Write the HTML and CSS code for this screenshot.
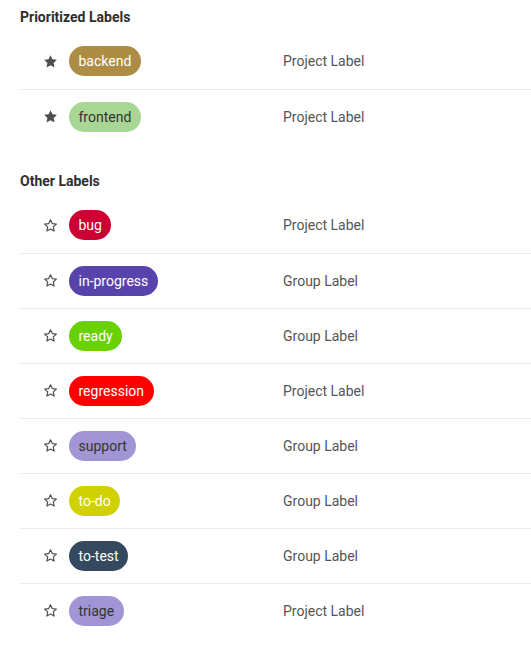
FILE: index.html
```html
<!DOCTYPE html>
<html>
<head>
<meta charset="utf-8">
<link rel="stylesheet" href="styles.css">
</head>
<body>
<div class="page">
  <section class="section">
    <h3 class="heading">Prioritized Labels</h3>
    <ul class="list">
      <li class="row"><span class="star"><svg viewBox="0 0 24 24" width="15" height="15"><path class="filled" d="M12 1.8l3.1 6.6 7.2.9-5.3 5 1.4 7.1L12 17.9l-6.4 3.5L7 14.3l-5.3-5 7.2-.9z"/></svg></span><span class="name"><span class="pill light" style="background:#ad8d43;color:#fff">backend</span></span><span class="type">Project Label</span></li>
      <li class="row"><span class="star"><svg viewBox="0 0 24 24" width="15" height="15"><path class="filled" d="M12 1.8l3.1 6.6 7.2.9-5.3 5 1.4 7.1L12 17.9l-6.4 3.5L7 14.3l-5.3-5 7.2-.9z"/></svg></span><span class="name"><span class="pill dark" style="background:#a8d695">frontend</span></span><span class="type">Project Label</span></li>
    </ul>
  </section>
  <section class="section other">
    <h3 class="heading">Other Labels</h3>
    <ul class="list">
      <li class="row"><span class="star"><svg viewBox="0 0 24 24" width="15" height="15"><path class="outline" d="M12 2.8l2.8 6.1 6.6.8-4.9 4.6 1.3 6.6L12 17.6l-5.8 3.3 1.3-6.6-4.9-4.6 6.6-.8z"/></svg></span><span class="name"><span class="pill light" style="background:#cc0033">bug</span></span><span class="type">Project Label</span></li>
      <li class="row"><span class="star"><svg viewBox="0 0 24 24" width="15" height="15"><path class="outline" d="M12 2.8l2.8 6.1 6.6.8-4.9 4.6 1.3 6.6L12 17.6l-5.8 3.3 1.3-6.6-4.9-4.6 6.6-.8z"/></svg></span><span class="name"><span class="pill light" style="background:#5843ad">in-progress</span></span><span class="type">Group Label</span></li>
      <li class="row"><span class="star"><svg viewBox="0 0 24 24" width="15" height="15"><path class="outline" d="M12 2.8l2.8 6.1 6.6.8-4.9 4.6 1.3 6.6L12 17.6l-5.8 3.3 1.3-6.6-4.9-4.6 6.6-.8z"/></svg></span><span class="name"><span class="pill light" style="background:#69d100">ready</span></span><span class="type">Group Label</span></li>
      <li class="row"><span class="star"><svg viewBox="0 0 24 24" width="15" height="15"><path class="outline" d="M12 2.8l2.8 6.1 6.6.8-4.9 4.6 1.3 6.6L12 17.6l-5.8 3.3 1.3-6.6-4.9-4.6 6.6-.8z"/></svg></span><span class="name"><span class="pill light" style="background:#ff0000">regression</span></span><span class="type">Project Label</span></li>
      <li class="row"><span class="star"><svg viewBox="0 0 24 24" width="15" height="15"><path class="outline" d="M12 2.8l2.8 6.1 6.6.8-4.9 4.6 1.3 6.6L12 17.6l-5.8 3.3 1.3-6.6-4.9-4.6 6.6-.8z"/></svg></span><span class="name"><span class="pill dark" style="background:#a295d6">support</span></span><span class="type">Group Label</span></li>
      <li class="row"><span class="star"><svg viewBox="0 0 24 24" width="15" height="15"><path class="outline" d="M12 2.8l2.8 6.1 6.6.8-4.9 4.6 1.3 6.6L12 17.6l-5.8 3.3 1.3-6.6-4.9-4.6 6.6-.8z"/></svg></span><span class="name"><span class="pill light" style="background:#d1d100">to-do</span></span><span class="type">Group Label</span></li>
      <li class="row"><span class="star"><svg viewBox="0 0 24 24" width="15" height="15"><path class="outline" d="M12 2.8l2.8 6.1 6.6.8-4.9 4.6 1.3 6.6L12 17.6l-5.8 3.3 1.3-6.6-4.9-4.6 6.6-.8z"/></svg></span><span class="name"><span class="pill light" style="background:#34495e">to-test</span></span><span class="type">Group Label</span></li>
      <li class="row"><span class="star"><svg viewBox="0 0 24 24" width="15" height="15"><path class="outline" d="M12 2.8l2.8 6.1 6.6.8-4.9 4.6 1.3 6.6L12 17.6l-5.8 3.3 1.3-6.6-4.9-4.6 6.6-.8z"/></svg></span><span class="name"><span class="pill dark" style="background:#a295d6">triage</span></span><span class="type">Project Label</span></li>
    </ul>
  </section>
</div>
</body>
</html>
```
FILE: styles.css
```css
html, body {
  margin: 0;
  padding: 0;
  background: #fff;
}
body {
  font-family: Roboto, "Liberation Sans", sans-serif;
  font-size: 14px;
  color: #2e2e2e;
}
.page {
  padding-left: 20px;
}
.section.other {
  margin-top: 20px;
}
.heading {
  margin: 0;
  height: 34px;
  line-height: 34px;
  font-size: 14px;
  font-weight: 700;
  color: #2e2e2e;
}
.list {
  list-style: none;
  margin: 0;
  padding: 0;
}
.row {
  display: flex;
  align-items: center;
  height: 55px;
  padding-left: 23px;
  padding-bottom: 1px;
  box-sizing: border-box;
}
.row + .row {
  border-top: 1px solid #ececec;
}
.star {
  width: 15px;
  height: 15px;
  margin-right: 11px;
  display: flex;
}
.star svg {
  display: block;
}
.filled {
  fill: #4f4f4f;
}
.outline {
  fill: none;
  stroke: #4f4f4f;
  stroke-width: 1.9;
  stroke-linejoin: round;
}
.name {
  width: 214px;
  flex: none;
  display: flex;
}
.pill {
  display: inline-block;
  height: 30px;
  line-height: 30px;
  padding: 0 9.5px;
  border-radius: 15px;
  font-size: 14px;
}
.pill.light {
  color: #fff;
}
.pill.dark {
  color: #333;
}
.type {
  color: #555;
  font-size: 14px;
  line-height: 20px;
}
```
